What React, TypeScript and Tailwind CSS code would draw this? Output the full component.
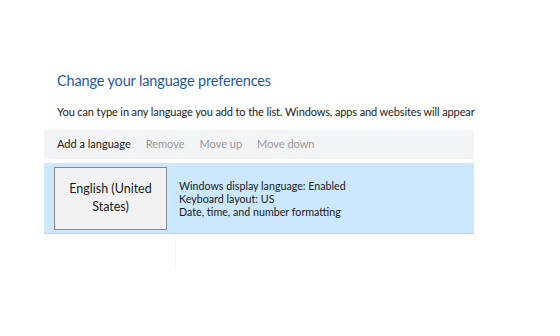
export default function App() {
  return (
    <div
      className="w-[560px] h-[336px] bg-white overflow-hidden"
      style={{ fontFamily: 'Lato, "Noto Sans", sans-serif' }}
    >
      <div className="pl-[44px] w-[474px] pt-[71px]">
        <h1 className="pl-[13px] text-[14.5px] tracking-[-0.15px] leading-[20px] text-[#1e5a9e] font-normal">
          Change your language preferences
        </h1>
        <p className="pl-[13px] mt-[13px] text-[11px] tracking-[-0.12px] leading-[16px] text-[#1a1a1a] whitespace-nowrap">
          You can type in any language you add to the list. Windows, apps and websites will appear
        </p>
        <div className="mt-[10px] h-[29px] bg-[#f3f4f5] flex items-center pl-[13px] gap-[15px] text-[11px]">
          <span className="text-[#1a1a1a]">Add a language</span>
          <span className="text-[#9a9a9a]">Remove</span>
          <span className="text-[#9a9a9a]">Move up</span>
          <span className="text-[#9a9a9a]">Move down</span>
        </div>
        <div className="mt-[4px] h-[71px] bg-[#cce8fe] border-b border-[#b5d6ee] flex items-center pl-[10px]">
          <div className="w-[113px] h-[63px] bg-[#f2f2f2] border border-[#8a8a8a] flex items-center justify-center text-center text-[12.5px] leading-[18px] text-[#1a1a1a]">
            English (United
            <br />
            States)
          </div>
          <div className="ml-[12px] text-[10.7px] leading-[13px] text-[#1a1a1a]">
            <div>Windows display language: Enabled</div>
            <div>Keyboard layout: US</div>
            <div>Date, time, and number formatting</div>
          </div>
        </div>
        <div className="ml-[131px] w-px h-[36px] bg-[#f4f4f4]" />
      </div>
    </div>
  );
}
